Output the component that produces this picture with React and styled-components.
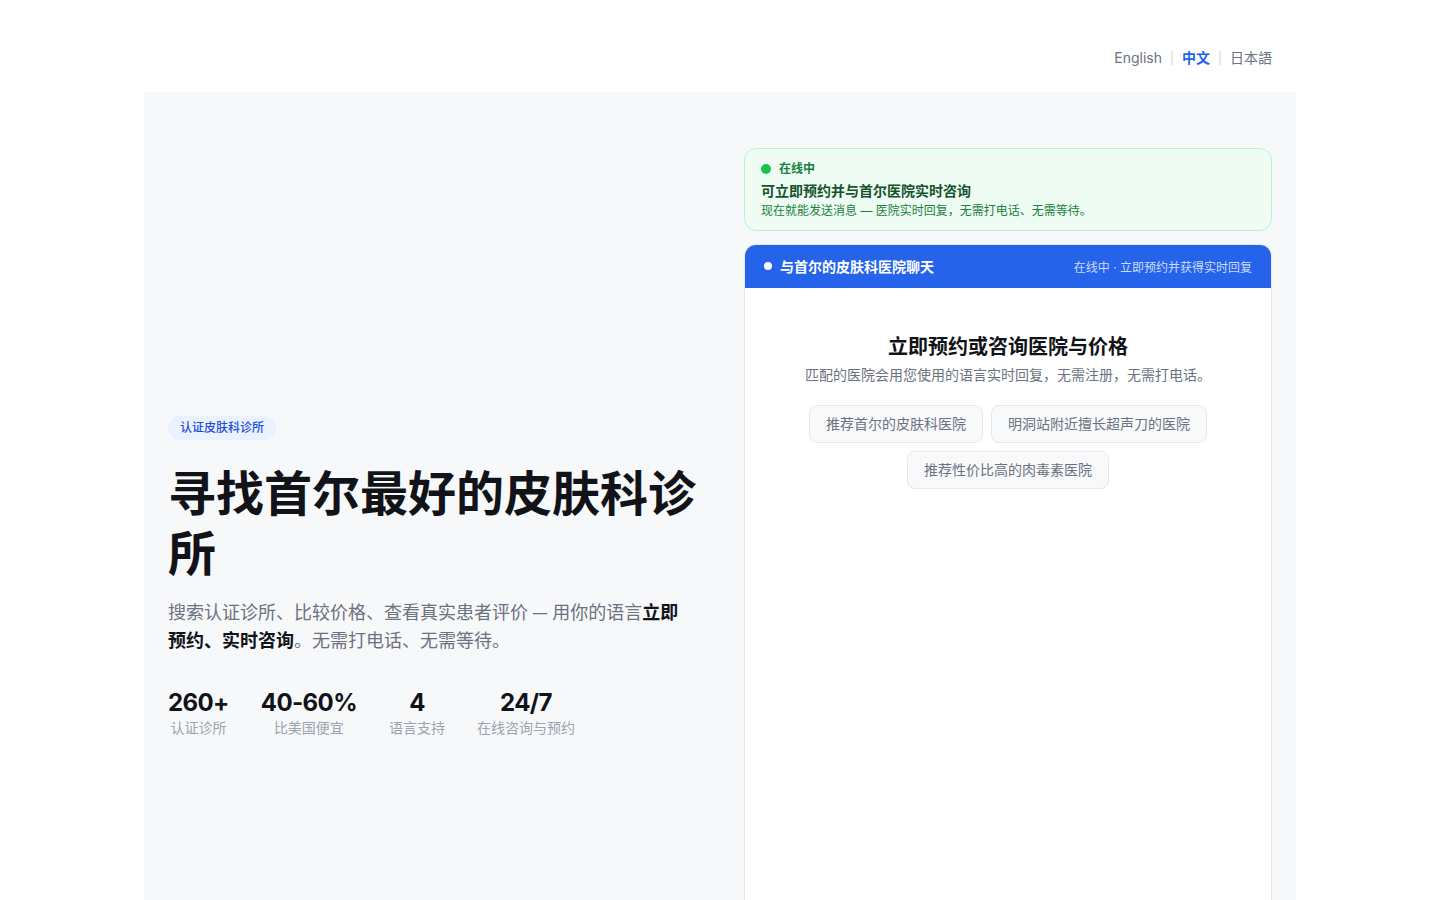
import React from 'react';
import styled, { createGlobalStyle } from 'styled-components';

const GlobalStyle = createGlobalStyle`
  body {
    margin: 0;
    background: #fff;
    font-family: Inter, 'Noto Sans CJK SC', 'Noto Sans', sans-serif;
    color: #111827;
  }
  * { box-sizing: border-box; }
`;

const Page = styled.div`
  max-width: 1152px;
  margin: 0 auto;
`;

const LangBar = styled.nav`
  display: flex;
  justify-content: flex-end;
  align-items: center;
  gap: 8px;
  padding: 48px 24px 24px;
  font-size: 14px;
  line-height: 20px;
`;

const LangLink = styled.a`
  color: ${props => props.active ? '#2563eb' : '#6b7280'};
  font-weight: ${props => props.active ? 600 : 400};
  text-decoration: none;
  cursor: pointer;
`;

const Divider = styled.span`
  color: #d1d5db;
  font-size: 12px;
`;

const Hero = styled.section`
  background: #f7f8fa;
  padding: 56px 24px;
  display: grid;
  grid-template-columns: 1fr 1fr;
  gap: 48px;
  align-items: center;
`;

const Intro = styled.div`
  display: flex;
  flex-direction: column;
  align-items: flex-start;
  padding-bottom: 3px;
`;

const Badge = styled.span`
  display: inline-block;
  background: #eaf1ff;
  color: #1d4ed8;
  font-size: 12px;
  line-height: 16px;
  font-weight: 500;
  padding: 4px 12px;
  border-radius: 999px;
`;

const Title = styled.h1`
  margin: 24px 0 0;
  font-size: 48px;
  line-height: 60px;
  font-weight: 700;
  color: #111318;
`;

const Lead = styled.p`
  margin: 13px 0 0;
  font-family: 'Noto Sans CJK SC', sans-serif;
  font-size: 18px;
  line-height: 28px;
  color: #6b7280;

  strong {
    color: #111318;
    font-weight: 700;
  }
`;

const Stats = styled.div`
  display: flex;
  gap: 32px;
  margin-top: 35px;
`;

const Stat = styled.div`
  display: flex;
  flex-direction: column;
  align-items: center;
`;

const StatValue = styled.span`
  font-size: 24px;
  line-height: 30px;
  font-weight: 700;
  letter-spacing: -0.6px;
  color: #111318;
`;

const StatLabel = styled.span`
  font-size: 14px;
  line-height: 20px;
  color: #9ca3af;
`;

const Side = styled.div`
  display: flex;
  flex-direction: column;
  gap: 13px;
`;

const Notice = styled.div`
  background: #effcf3;
  border: 1px solid #b9f3cc;
  border-radius: 12px;
  padding: 12px 16px 11px;
`;

const OnlineRow = styled.div`
  display: flex;
  align-items: center;
  gap: 8px;
  font-size: 12px;
  line-height: 16px;
  font-weight: 600;
  color: #15803d;
`;

const Dot = styled.span`
  width: ${props => props.size}px;
  height: ${props => props.size}px;
  border-radius: 50%;
  background: ${props => props.color};
  flex-shrink: 0;
`;

const NoticeTitle = styled.div`
  margin-top: 4px;
  font-size: 14px;
  line-height: 20px;
  font-weight: 700;
  color: #14532d;
`;

const NoticeText = styled.div`
  margin-top: 2px;
  font-size: 12px;
  line-height: 16px;
  color: #16803c;
`;

const ChatCard = styled.div`
  background: #fff;
  border: 1px solid #e5e7eb;
  border-radius: 12px;
  overflow: hidden;
  height: 764px;
  display: flex;
  flex-direction: column;
`;

const ChatHeader = styled.div`
  background: #2563eb;
  height: 44px;
  margin: -1px -1px 0;
  padding: 0 20px;
  display: flex;
  align-items: center;
  justify-content: space-between;
  color: #fff;
`;

const ChatName = styled.div`
  display: flex;
  align-items: center;
  gap: 8px;
  font-size: 14px;
  font-weight: 600;
`;

const ChatStatus = styled.span`
  font-size: 12px;
  color: rgba(255, 255, 255, 0.78);
`;

const ChatBody = styled.div`
  padding: 45px 24px 0;
  display: flex;
  flex-direction: column;
  align-items: center;
  text-align: center;
`;

const ChatTitle = styled.h2`
  margin: 0;
  font-size: 20px;
  line-height: 28px;
  font-weight: 700;
  color: #111318;
`;

const ChatSub = styled.p`
  margin: 4px 0 0;
  font-size: 14px;
  line-height: 20px;
  color: #6b7280;
`;

const Suggestions = styled.div`
  margin-top: 20px;
  display: flex;
  flex-wrap: wrap;
  justify-content: center;
  gap: 8px;
  max-width: 420px;
`;

const Chip = styled.button`
  font-family: inherit;
  font-size: 14px;
  line-height: 20px;
  color: #6b7280;
  background: #f8f9fb;
  border: 1px solid #e5e7eb;
  border-radius: 8px;
  padding: 8px 16px;
  cursor: pointer;
`;

const stats = [
  { value: '260+', label: '认证诊所' },
  { value: '40-60%', label: '比美国便宜' },
  { value: '4', label: '语言支持' },
  { value: '24/7', label: '在线咨询与预约' },
];

const prompts = [
  '推荐首尔的皮肤科医院',
  '明洞站附近擅长超声刀的医院',
  '推荐性价比高的肉毒素医院',
];

export default function App() {
  return (
    <>
      <GlobalStyle />
      <Page>
        <LangBar>
          <LangLink>English</LangLink>
          <Divider>|</Divider>
          <LangLink active>中文</LangLink>
          <Divider>|</Divider>
          <LangLink>日本語</LangLink>
        </LangBar>
        <Hero>
          <Intro>
            <Badge>认证皮肤科诊所</Badge>
            <Title>寻找首尔最好的皮肤科诊所</Title>
            <Lead>
              搜索认证诊所、比较价格、查看真实患者评价 — 用你的语言<strong>立即预约、实时咨询</strong>。无需打电话、无需等待。
            </Lead>
            <Stats>
              {stats.map(s => (
                <Stat key={s.label}>
                  <StatValue>{s.value}</StatValue>
                  <StatLabel>{s.label}</StatLabel>
                </Stat>
              ))}
            </Stats>
          </Intro>
          <Side>
            <Notice>
              <OnlineRow>
                <Dot size={10} color="#16c44a" />
                在线中
              </OnlineRow>
              <NoticeTitle>可立即预约并与首尔医院实时咨询</NoticeTitle>
              <NoticeText>现在就能发送消息 — 医院实时回复，无需打电话、无需等待。</NoticeText>
            </Notice>
            <ChatCard>
              <ChatHeader>
                <ChatName>
                  <Dot size={8} color="#fff" />
                  与首尔的皮肤科医院聊天
                </ChatName>
                <ChatStatus>在线中 · 立即预约并获得实时回复</ChatStatus>
              </ChatHeader>
              <ChatBody>
                <ChatTitle>立即预约或咨询医院与价格</ChatTitle>
                <ChatSub>匹配的医院会用您使用的语言实时回复，无需注册，无需打电话。</ChatSub>
                <Suggestions>
                  {prompts.map(p => <Chip key={p}>{p}</Chip>)}
                </Suggestions>
              </ChatBody>
            </ChatCard>
          </Side>
        </Hero>
      </Page>
    </>
  );
}
